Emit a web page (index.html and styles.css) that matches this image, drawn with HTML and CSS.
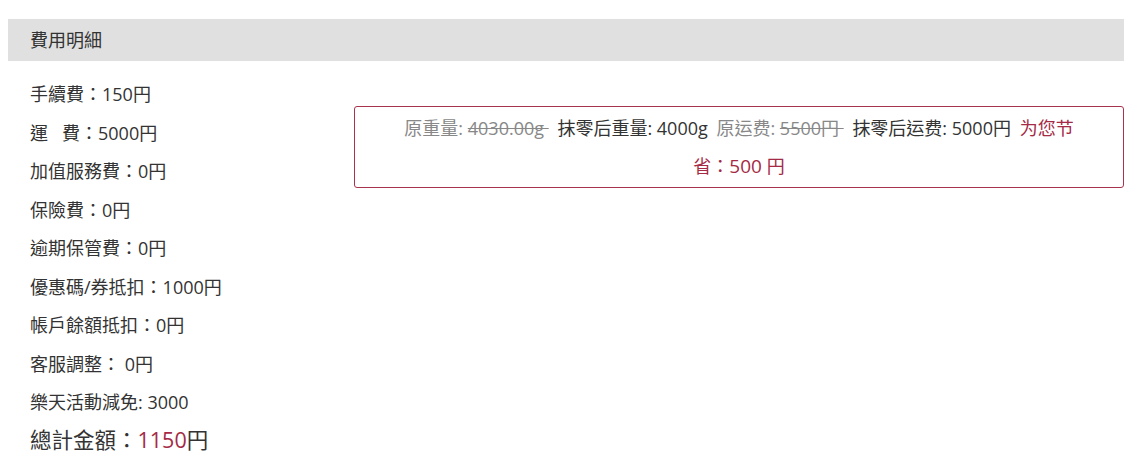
FILE: index.html
```html
<!DOCTYPE html>
<html lang="zh-Hant">
<head>
<meta charset="utf-8">
<title>費用明細</title>
<link rel="stylesheet" href="styles.css">
</head>
<body>
<div class="panel">
  <div class="panel-head">費用明細</div>
  <div class="panel-body">
    <ul class="fees">
      <li>手續費：150円</li>
      <li>運&nbsp;&nbsp;&nbsp;費：5000円</li>
      <li>加值服務費：0円</li>
      <li>保險費：0円</li>
      <li>逾期保管費：0円</li>
      <li>優惠碼/券抵扣：1000円</li>
      <li>帳戶餘額抵扣：0円</li>
      <li>客服調整： 0円</li>
      <li>樂天活動減免: 3000</li>
      <li class="total">總計金額：<span class="red">1150</span>円</li>
    </ul>
    <div class="notice">
      <span class="old">原重量: <s>4030.00g&nbsp;</s></span>
      <span class="new">抹零后重量: 4000g</span>
      <span class="old">原运费: <s>5500円&nbsp;</s></span>
      <span class="new">抹零后运费: 5000円</span>
      <span class="save">为您节省：<b>500</b> 円</span>
    </div>
  </div>
</div>
</body>
</html>
```
FILE: styles.css
```css
html, body {
  margin: 0;
  padding: 0;
  background: #fff;
}
body {
  font-family: "Open Sans", "Noto Sans CJK TC", sans-serif;
  color: #333;
  font-size: 18px;
}
.panel {
  padding: 19px 19px 0 8px;
}
.panel-head {
  background: #e0e0e0;
  height: 42px;
  line-height: 42px;
  padding-left: 22px;
  font-size: 18px;
  color: #333;
}
.panel-body {
  display: flex;
  align-items: flex-start;
}
.fees {
  list-style: none;
  margin: 14px 0 0 0;
  padding: 0 0 0 22px;
  width: 324px;
  flex: none;
}
.fees li {
  line-height: 38.5px;
  height: 38.5px;
  white-space: nowrap;
}
.fees li.total {
  font-size: 21.5px;
  line-height: 36px;
  height: 36px;
}
.red {
  color: #a52a45;
}
.notice {
  flex: 1;
  margin-top: 45px;
  border: 1px solid #a8334f;
  border-radius: 3px;
  padding: 2px 44px 2px 44px;
  text-align: center;
  line-height: 38px;
  height: 76px;
  color: #333;
}
.notice span + span {
  margin-left: 4px;
}
.notice .old {
  color: #888;
}
.notice s {
  color: #888;
}
.notice .save {
  color: #a52a45;
}
.notice .save b {
  font-weight: normal;
  font-size: 19px;
}
```
